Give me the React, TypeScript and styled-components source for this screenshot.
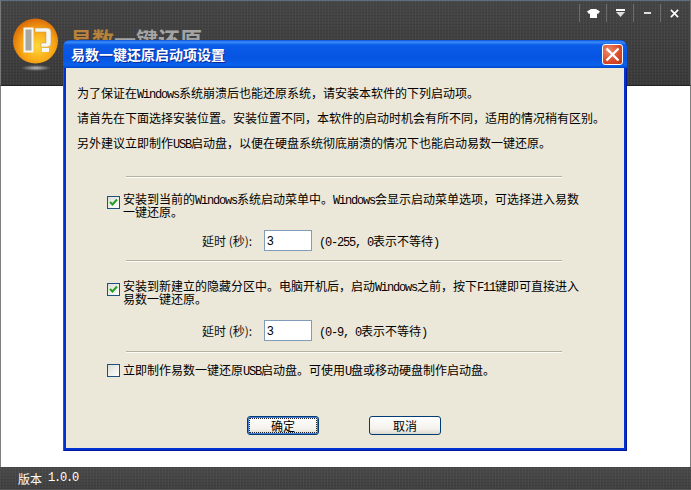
import styled, { createGlobalStyle } from "styled-components";

const GlobalStyle = createGlobalStyle`
  html, body {
    margin: 0;
    padding: 0;
    background: #fff;
  }
`;

const CJK = `"Noto Sans CJK SC", "Liberation Sans", sans-serif`;

const texture = `
  repeating-linear-gradient(90deg, rgba(255,255,255,0.035) 0 1px, transparent 1px 3px),
  repeating-linear-gradient(0deg, rgba(0,0,0,0.08) 0 1px, transparent 1px 3px)
`;

const Page = styled.div`
  position: relative;
  width: 691px;
  height: 490px;
  overflow: hidden;
  display: flex;
  flex-direction: column;
  font-family: ${CJK};
  font-size: 12px;
  color: #000;
  background: #fff;
`;

const Header = styled.header`
  height: 86px;
  flex-shrink: 0;
  box-sizing: border-box;
  display: flex;
  justify-content: space-between;
  padding: 0 3px 0 12px;
  border-top: 1px solid #5d6f80;
  border-left: 1px solid #777;
  border-right: 1px solid #777;
  border-bottom: 1px solid #222;
  background: ${texture}, linear-gradient(#454545, #3a3a3a);
`;

const Brand = styled.div`
  display: flex;
  align-items: flex-start;
  gap: 12px;
  padding-top: 17px;
`;

const AppName = styled.div`
  font-size: 22px;
  font-weight: 700;
  line-height: 28px;
  margin-top: 6px;
  color: #a4a4a4;
`;

const AppNameAccent = styled.span`
  color: #b8823a;
`;

const Controls = styled.div`
  display: flex;
  height: 18px;
  margin-top: 3px;
`;

const Control = styled.div`
  width: 27px;
  display: flex;
  align-items: center;
  justify-content: center;
  border-left: 1px solid #6c6c6c;
  box-sizing: border-box;
`;

const Main = styled.main`
  flex: 1;
  background: #fff;
  border-left: 1px solid #808080;
  border-right: 1px solid #808080;
`;

const Footer = styled.footer`
  height: 23px;
  flex-shrink: 0;
  box-sizing: border-box;
  padding-left: 18px;
  display: flex;
  align-items: center;
  color: #fff;
  border-bottom: 1px solid #555;
  background: ${texture}, linear-gradient(#4a4a4a, #404040);
`;

const Latin = styled.span`
  font-family: "Liberation Mono", monospace;
  font-size: 12px;
  letter-spacing: -1.2px;
  line-height: 0;
`;

const FooterVersion = styled(Latin)`
  margin-left: 6px;
`;

const Dialog = styled.section`
  position: absolute;
  left: 63px;
  top: 40px;
  width: 564px;
  height: 411px;
  box-sizing: border-box;
  display: flex;
  flex-direction: column;
  border-radius: 7px 7px 0 0;
  background: #0032d0;
  padding: 0 3px 3px;
  box-shadow: inset 1px 0 #0a5ae8, inset -1px 0 #00149c, inset 0 -1px #00149c;
`;

const TitleBar = styled.div`
  height: 28px;
  flex-shrink: 0;
  margin: 0 -3px;
  padding: 0 3px 0 8px;
  display: flex;
  align-items: center;
  justify-content: space-between;
  border-radius: 7px 7px 0 0;
  background: linear-gradient(#0a4fd8 0, #3a8cf8 2px, #0a5ce8 5px, #0554e2 18px, #0a62ec 25px, #0048cc 28px);
`;

const Title = styled.h1`
  margin: 0;
  font-size: 14px;
  font-weight: 700;
  color: #fff;
  text-shadow: 1px 1px 0 #0a2a9a;
`;

const CloseButton = styled.button`
  width: 21px;
  height: 21px;
  padding: 0;
  margin-right: 1px;
  display: flex;
  align-items: center;
  justify-content: center;
  border: 1px solid #fff;
  border-radius: 3px;
  background: radial-gradient(circle at 30% 30%, #ec8a6c, #d8492a 60%, #bd3610);
`;

const Body = styled.div`
  flex: 1;
  display: flex;
  flex-direction: column;
  background: #ebe8d9;
  padding: 12px 11px 0 11px;
`;

const Intro = styled.p`
  margin: 0;
  line-height: 25px;
  white-space: nowrap;
`;

const Rule = styled.hr<{ $top: number }>`
  width: 436px;
  height: 2px;
  margin: ${({ $top }) => $top}px 0 0 49px;
  border: 0;
  background: linear-gradient(#b4b1a2 50%, #fdfdf8 50%);
  flex-shrink: 0;
`;

const Option = styled.label<{ $top: number }>`
  display: flex;
  align-items: flex-start;
  gap: 3px;
  width: 476px;
  margin: ${({ $top }) => $top}px 0 0 30px;
`;

const Box = styled.span<{ $top: number }>`
  width: 11px;
  height: 11px;
  flex-shrink: 0;
  margin-top: ${({ $top }) => $top}px;
  display: flex;
  align-items: center;
  justify-content: center;
  border: 1px solid #1c5180;
  background: linear-gradient(135deg, #dcdcd7, #fff);
`;

const OptionText = styled.span`
  line-height: 13px;
`;

const DelayRow = styled.div<{ $top: number }>`
  display: flex;
  align-items: center;
  margin: ${({ $top }) => $top}px 0 0 125px;
  height: 21px;
`;

const DelayLabel = styled.span`
  width: 62px;
  white-space: nowrap;
  color: #111;
`;

const DelayInput = styled.input`
  width: 48px;
  height: 21px;
  box-sizing: border-box;
  padding: 0 2px;
  border: 1px solid #7f9db9;
  background: #fff;
  font-family: "Liberation Sans", sans-serif;
  font-size: 12px;
  color: #000;
  outline: none;
`;

const DelayHint = styled.span`
  margin-left: 7px;
  white-space: nowrap;
`;

const Buttons = styled.div`
  display: flex;
  gap: 50px;
  margin: auto 0 13px 170px;
`;

const Button = styled.button<{ $focused?: boolean }>`
  width: 72px;
  height: 19px;
  padding: 0;
  box-sizing: border-box;
  border: 1px solid #003c74;
  border-radius: 3px;
  font-family: ${CJK};
  font-size: 12px;
  line-height: 15px;
  color: #000;
  background: linear-gradient(#fff, #f3f2ec 70%, #dcd8ce);
  ${({ $focused }) =>
    $focused &&
    `
    box-shadow: inset 0 0 0 1px #4a7ad8;
    outline: 1px dotted #222;
    outline-offset: -3px;
  `}
`;

const Logo = () => (
  <svg width="45" height="56" viewBox="0 0 45 56">
    <defs>
      <radialGradient id="orb" cx="0.55" cy="0.62" r="0.62">
        <stop offset="0" stopColor="#ffd83c" />
        <stop offset="0.6" stopColor="#f8a414" />
        <stop offset="1" stopColor="#d86a08" />
      </radialGradient>
      <radialGradient id="glow" cx="0.5" cy="0.5" r="0.5">
        <stop offset="0" stopColor="#b8b8b8" />
        <stop offset="1" stopColor="#b8b8b8" stopOpacity="0" />
      </radialGradient>
    </defs>
    <circle cx="22.500" cy="23" r="22.500" fill="url(#orb)" />
    <ellipse cx="23" cy="50" rx="15" ry="3" fill="url(#glow)" />
    <rect x="11.500" y="10.500" width="8" height="23" fill="#a8a8a0" stroke="#f6f6f2" strokeWidth="2" />
    <path d="M22 10h12q4 0 4 4v11q0 4-4 4h-6v-4h5v-11h-11z" fill="#f6f6f2" stroke="#b89a60" strokeWidth="0.5" />
    <path d="M29 30h7v4h-7z" fill="#f6f6f2" />
  </svg>
);

const ShirtIcon = () => (
  <svg width="13" height="9" viewBox="0 0 13 9">
    <path d="M4 0h5l4 2.500-2 2.500-1-.5V9H3V4.500L2 5 0 2.500z" fill="#fff" />
  </svg>
);

const SkinIcon = () => (
  <svg width="9" height="8" viewBox="0 0 9 8">
    <rect width="9" height="2" fill="#fff" />
    <path d="M0 3h9L4.500 8z" fill="#ddd" />
  </svg>
);

const MinIcon = () => (
  <svg width="7" height="2" viewBox="0 0 7 2">
    <rect width="7" height="2" fill="#ddd" />
  </svg>
);

const CloseIcon = ({ size, weight }: { size: number; weight: number }) => (
  <svg width={size} height={size} viewBox="0 0 10 10">
    <path d="M1 1l8 8M9 1l-8 8" stroke="#fff" strokeWidth={weight} fill="none" />
  </svg>
);

const Check = () => (
  <svg width="9" height="9" viewBox="0 0 9 9">
    <path d="M1 4l2.500 2.500L8 1.500" stroke="#21a121" strokeWidth="2" fill="none" />
  </svg>
);

export default function App() {
  return (
    <Page>
      <GlobalStyle />
      <Header>
        <Brand>
          <Logo />
          <AppName>
            <AppNameAccent>易数</AppNameAccent>一键还原
          </AppName>
        </Brand>
        <Controls>
          <Control>
            <ShirtIcon />
          </Control>
          <Control>
            <SkinIcon />
          </Control>
          <Control>
            <MinIcon />
          </Control>
          <Control>
            <CloseIcon size={9} weight={1.8} />
          </Control>
        </Controls>
      </Header>
      <Main />
      <Footer>
        版本<FooterVersion>1.0.0</FooterVersion>
      </Footer>

      <Dialog>
        <TitleBar>
          <Title>易数一键还原启动项设置</Title>
          <CloseButton aria-label="关闭">
            <CloseIcon size={15} weight={1.6} />
          </CloseButton>
        </TitleBar>
        <Body>
          <Intro>
            为了保证在<Latin>Windows</Latin>系统崩溃后也能还原系统，请安装本软件的下列启动项。
            <br />
            请首先在下面选择安装位置。安装位置不同，本软件的启动时机会有所不同，适用的情况稍有区别。
            <br />
            另外建议立即制作<Latin>USB</Latin>启动盘，以便在硬盘系统彻底崩溃的情况下也能启动易数一键还原。
          </Intro>
          <Rule $top={21} />
          <Option $top={14}>
            <Box $top={4}>
              <Check />
            </Box>
            <OptionText>
              安装到当前的<Latin>Windows</Latin>系统启动菜单中。<Latin>Windows</Latin>
              会显示启动菜单选项，可选择进入易数一键还原。
            </OptionText>
          </Option>
          <DelayRow $top={12}>
            <DelayLabel>延时 (秒):</DelayLabel>
            <DelayInput defaultValue="3" />
            <DelayHint>
              <Latin>(0-255, 0</Latin>表示不等待<Latin>)</Latin>
            </DelayHint>
          </DelayRow>
          <Rule $top={9} />
          <Option $top={17}>
            <Box $top={4}>
              <Check />
            </Box>
            <OptionText>
              安装到新建立的隐藏分区中。电脑开机后，启动<Latin>Windows</Latin>之前，按下<Latin>F11</Latin>
              键即可直接进入易数一键还原。
            </OptionText>
          </Option>
          <DelayRow $top={15}>
            <DelayLabel>延时 (秒):</DelayLabel>
            <DelayInput defaultValue="3" />
            <DelayHint>
              <Latin>(0-9, 0</Latin>表示不等待<Latin>)</Latin>
            </DelayHint>
          </DelayRow>
          <Rule $top={10} />
          <Option $top={10}>
            <Box $top={1}></Box>
            <OptionText>
              立即制作易数一键还原<Latin>USB</Latin>启动盘。可使用<Latin>U</Latin>盘或移动硬盘制作启动盘。
            </OptionText>
          </Option>
          <Buttons>
            <Button $focused>确定</Button>
            <Button>取消</Button>
          </Buttons>
        </Body>
      </Dialog>
    </Page>
  );
}
